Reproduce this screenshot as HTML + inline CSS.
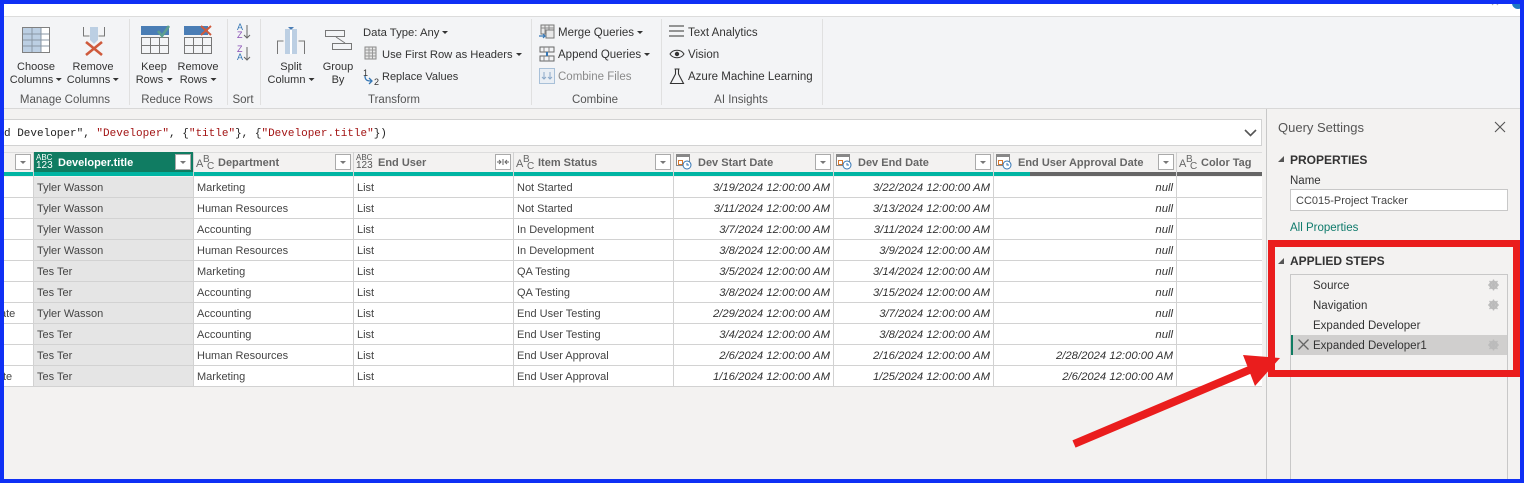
<!DOCTYPE html>
<html><head><meta charset="utf-8"><style>
html,body{margin:0;padding:0}
body{width:1524px;height:483px;position:relative;overflow:hidden;background:#f3f2f1;font-family:"Liberation Sans",sans-serif;font-size:11.5px;color:#333}
.a{position:absolute;white-space:nowrap}
.l{position:absolute;background:#d2d2d2}
.c{position:absolute;white-space:nowrap;text-align:center;transform:translateX(-50%);line-height:13px;font-size:11px;margin-top:1px}
.g{position:absolute;white-space:nowrap;text-align:center;transform:translateX(-50%);color:#555;top:94px;line-height:13px}
.h{position:absolute;top:156px;line-height:14px;font-weight:bold;color:#666;font-size:11px;white-space:nowrap}
.t{position:absolute;white-space:nowrap;line-height:14px;font-size:11px;color:#444;margin-top:1px}
.r{position:absolute;white-space:nowrap;line-height:14px;font-size:11.300px;color:#333;font-style:italic;text-align:right;margin-top:1px}
.b{position:absolute;top:154px;width:16px;height:16px;background:#fff;border:1px solid #aaa;box-sizing:border-box}
.b:after{content:"";position:absolute;left:4px;top:6px;border:3px solid transparent;border-top:3px solid #777;border-bottom:0}
svg{position:absolute;overflow:visible}
.ar:after{content:"";display:inline-block;margin-left:3px;vertical-align:2px;border:3px solid transparent;border-top:3px solid #333;border-bottom:0}
.ty{position:absolute;top:154px;font-size:8px;line-height:8px;color:#555}
.abc{position:absolute;top:0;left:0;font-size:11px;line-height:11px;color:#666}
.abc i{position:absolute;font-style:normal}
</style></head><body>
<div class="a" style="left:0;top:0;width:1524px;height:17px;background:#fff"></div>
<div class="a" style="left:0;top:17px;width:1524px;height:91px;background:#f3f4f6"></div>
<div class="l" style="left:0;top:16px;width:1524px;height:1px;background:#dcdcdc"></div>
<div class="l" style="left:0;top:108px;width:1524px;height:1px;background:#d8d8d8"></div>
<!-- ribbon separators -->
<div class="l" style="left:129px;top:19px;width:1px;height:86px;background:#e0e0e0"></div>
<div class="l" style="left:227px;top:19px;width:1px;height:86px;background:#e0e0e0"></div>
<div class="l" style="left:260px;top:19px;width:1px;height:86px;background:#e0e0e0"></div>
<div class="l" style="left:531px;top:19px;width:1px;height:86px;background:#e0e0e0"></div>
<div class="l" style="left:661px;top:19px;width:1px;height:86px;background:#e0e0e0"></div>
<div class="l" style="left:822px;top:19px;width:1px;height:86px;background:#e0e0e0"></div>
<!-- ribbon icons -->
<svg style="left:0;top:0" width="830" height="100" fill="none">
<rect x="22.5" y="27.5" width="27" height="25" fill="#fff" stroke="#808080"/>
<rect x="23" y="28" width="18" height="24" fill="#bccfe3"/>
<path d="M23 34h26M23 40h26M23 46h26M32 28v24M41 28v24" stroke="#8a97a5"/>
<path d="M83.500 27v9h6M104.500 27v9h-6" stroke="#777"/>
<path d="M90 27h8v13l-4 4-4-4z" fill="#bccfe3"/>
<path d="M86 42l16 13M102 42l-16 13" stroke="#cf5a3c" stroke-width="2.600"/>
<rect x="141" y="26" width="28" height="9" fill="#4a7db5"/>
<path d="M141.500 37.500h27v16h-27zM141.500 45.500h27M150.500 37.500v16M159.500 37.500v16" stroke="#777"/>
<path d="M158 31l4 5 7-10" stroke="#5d9f90" stroke-width="2.600"/>
<rect x="184" y="26" width="24" height="9" fill="#4a7db5"/>
<path d="M184.500 37.500h27v16h-27zM184.500 45.500h27M193.500 37.500v16M202.500 37.500v16" stroke="#777"/>
<path d="M201 26l10 9M211 26l-10 9" stroke="#cf5a3c" stroke-width="2"/>
<path d="M247 25v13M244 35l3 3 3-3M247 47v13M244 57l3 3 3-3" stroke="#666"/>
<path d="M277.500 54v-13h6M304.500 54v-13h-6" stroke="#777"/>
<rect x="285" y="29" width="12" height="25" fill="#bccfe3"/>
<path d="M291 29v25" stroke="#fff" stroke-width="2"/>
<path d="M288 27h6l-3 3z" fill="#4a7db5"/>
<path d="M325.500 30.500h19v6h-19zM332.500 43.500h19v6h-19zM336 37l9 6" stroke="#777" fill="#f3f4f6"/>
<rect x="365" y="47" width="11" height="12" fill="#e8e8e8" stroke="#888"/>
<path d="M365 50h11M365 53h11M365 56h11M369 47v12M372.500 47v12" stroke="#999"/>
<path d="M365 76c0 4 2 5 6 5M369 78l3 3-3 3" stroke="#3476b5" stroke-width="1.300"/>
<rect x="541" y="25" width="13" height="9" fill="#e8e8e8" stroke="#777"/><path d="M541 28h13M545 25v9M549 25v9" stroke="#888"/>
<rect x="546" y="30" width="8" height="8" fill="#e8e8e8" stroke="#777"/>
<path d="M539 36h6l-2-2M545 36l-2 2" stroke="#3476b5" stroke-width="1.200"/>
<path d="M540 47h14v5h-14zM540 56h14v5h-14z" stroke="#666" fill="#f3f4f6"/>
<path d="M544 47v5M549 47v5M544 56v5M549 56v5" stroke="#888"/>
<path d="M547 52v4" stroke="#3476b5" stroke-width="2"/>
<rect x="539.500" y="68.500" width="15" height="15" fill="#e9eef4" stroke="#a8c0d8"/>
<path d="M544 72v7M542 77l2 2 2-2M550 72v7M548 77l2 2 2-2" stroke="#8aa8c8"/>
<path d="M669 26h15M669 31h15M669 36h15" stroke="#333"/>
<path d="M670 54c3-5 11-5 14 0-3 5-11 5-14 0z" stroke="#333"/><circle cx="677" cy="54" r="2.200" fill="#333"/>
<path d="M674.500 69h5M675.500 69v5l-5 9.500h13l-5-9.500v-5" stroke="#333" stroke-width="1.100"/>
</svg>
<div class="a" style="left:237px;top:23px;font-size:9px;line-height:8px;color:#3476b5">A<br><span style="color:#8a4fb5">Z</span></div>
<div class="a" style="left:237px;top:45px;font-size:9px;line-height:8px;color:#8a4fb5">Z<br><span style="color:#3476b5">A</span></div>
<div class="c" style="left:36px;top:60px">Choose<br><span class="ar">Columns</span></div>
<div class="c" style="left:93px;top:60px">Remove<br><span class="ar">Columns</span></div>
<div class="c" style="left:154px;top:60px">Keep<br><span class="ar">Rows</span></div>
<div class="c" style="left:198px;top:60px">Remove<br><span class="ar">Rows</span></div>
<div class="c" style="left:291px;top:60px">Split<br><span class="ar">Column</span></div>
<div class="c" style="left:338px;top:60px">Group<br>By</div>
<div class="a ar" style="left:363px;top:26px;line-height:14px;font-size:11.300px">Data Type: Any</div>
<div class="a ar" style="left:382px;top:48px;line-height:14px;font-size:11.200px">Use First Row as Headers</div>
<div class="a" style="left:382px;top:70px;line-height:14px;font-size:11px">Replace Values</div>
<div class="a" style="left:363px;top:68px;font-size:9px;line-height:10px">1</div>
<div class="a" style="left:374px;top:77px;font-size:9px;line-height:10px">2</div>
<div class="a ar" style="left:558px;top:26px;line-height:14px">Merge Queries</div>
<div class="a ar" style="left:558px;top:48px;line-height:14px">Append Queries</div>
<div class="a" style="left:558px;top:70px;line-height:14px;color:#8a8a8a">Combine Files</div>
<div class="a" style="left:688px;top:26px;line-height:14px">Text Analytics</div>
<div class="a" style="left:688px;top:48px;line-height:14px">Vision</div>
<div class="a" style="left:688px;top:70px;line-height:14px">Azure Machine Learning</div>
<div class="g" style="left:65px">Manage Columns</div>
<div class="g" style="left:177px">Reduce Rows</div>
<div class="g" style="left:243px">Sort</div>
<div class="g" style="left:394px">Transform</div>
<div class="g" style="left:595px">Combine</div>
<div class="g" style="left:741px">AI Insights</div>
<!-- formula bar -->
<div class="a" style="left:0;top:119px;width:1262px;height:27px;background:#fff;border:1px solid #d2d2d2;border-left:0;box-sizing:border-box"></div>
<div class="a" style="left:4px;top:127px;font-family:'Liberation Mono',monospace;font-size:11px;line-height:14px;color:#222">d Developer", <span style="color:#a31515">"Developer"</span>, {<span style="color:#a31515">"title"</span>}, {<span style="color:#a31515">"Developer.title"</span>})</div>
<svg style="left:1244px;top:129px" width="13" height="8" fill="none"><path d="M1 1l5.500 5.500L12 1" stroke="#555" stroke-width="1.600"/></svg>
<!-- table -->
<div class="a" style="left:0;top:152px;width:1262px;height:20px;background:#f3f2f1;border-top:1px solid #ddd;box-sizing:border-box"></div>
<div class="a" style="left:34px;top:152px;width:159px;height:20px;background:#107c62"></div>
<div class="a" style="left:0;top:172px;width:1030px;height:4px;background:#00b5a3"></div>
<div class="a" style="left:1030px;top:172px;width:232px;height:4px;background:#666"></div>
<div class="a" style="left:0;top:177px;width:1262px;height:210px;background:#fff"></div>
<div class="a" style="left:34px;top:177px;width:159px;height:209px;background:#e5e5e5"></div>
<div class="l" style="left:0;top:197px;width:1262px;height:1px"></div>
<div class="l" style="left:0;top:218px;width:1262px;height:1px"></div>
<div class="l" style="left:0;top:239px;width:1262px;height:1px"></div>
<div class="l" style="left:0;top:260px;width:1262px;height:1px"></div>
<div class="l" style="left:0;top:281px;width:1262px;height:1px"></div>
<div class="l" style="left:0;top:302px;width:1262px;height:1px"></div>
<div class="l" style="left:0;top:323px;width:1262px;height:1px"></div>
<div class="l" style="left:0;top:344px;width:1262px;height:1px"></div>
<div class="l" style="left:0;top:365px;width:1262px;height:1px"></div>
<div class="l" style="left:0;top:386px;width:1262px;height:1px"></div>
<div class="l" style="left:33px;top:152px;width:1px;height:234px"></div>
<div class="l" style="left:193px;top:152px;width:1px;height:234px"></div>
<div class="l" style="left:353px;top:152px;width:1px;height:234px"></div>
<div class="l" style="left:513px;top:152px;width:1px;height:234px"></div>
<div class="l" style="left:673px;top:152px;width:1px;height:234px"></div>
<div class="l" style="left:833px;top:152px;width:1px;height:234px"></div>
<div class="l" style="left:993px;top:152px;width:1px;height:234px"></div>
<div class="l" style="left:1176px;top:152px;width:1px;height:234px"></div>
<div class="b" style="left:15px"></div>
<div class="ty" style="left:36px;color:#fff">ABC<br><span style="font-size:10px">123</span></div>
<div class="h" style="left:58px;color:#fff">Developer.title</div><div class="b" style="left:175px"></div>
<div class="abc" style="left:196px;top:153px"><i style="left:0;top:6px">A</i><i style="left:7px;top:1px;font-size:10px">B</i><i style="left:11px;top:8px;font-size:10px">C</i></div>
<div class="h" style="left:218px">Department</div><div class="b" style="left:335px"></div>
<div class="ty" style="left:356px">ABC<br><span style="font-size:10px">123</span></div>
<div class="h" style="left:378px">End User</div><div class="b" style="left:495px"></div>
<div class="abc" style="left:516px;top:153px"><i style="left:0;top:6px">A</i><i style="left:7px;top:1px;font-size:10px">B</i><i style="left:11px;top:8px;font-size:10px">C</i></div>
<div class="h" style="left:538px">Item Status</div><div class="b" style="left:655px"></div>
<div class="h" style="left:698px">Dev Start Date</div><div class="b" style="left:815px"></div>
<div class="h" style="left:858px">Dev End Date</div><div class="b" style="left:975px"></div>
<div class="h" style="left:1018px">End User Approval Date</div><div class="b" style="left:1158px"></div>
<div class="abc" style="left:1179px;top:153px"><i style="left:0;top:6px">A</i><i style="left:7px;top:1px;font-size:10px">B</i><i style="left:11px;top:8px;font-size:10px">C</i></div>
<div class="h" style="left:1201px">Color Tag</div>
<svg style="left:0;top:0" width="1200" height="175" fill="none">
<rect x="496" y="155" width="14" height="14" fill="#fff"/>
<path d="M497 162h4M499 160l2 2-2 2M509 162h-4M507 160l-2 2 2 2M503 159v6" stroke="#666"/>
<g><rect x="676.500" y="154.500" width="13" height="11" fill="#fff" stroke="#888"/><rect x="677" y="155" width="12" height="2" fill="#888"/><rect x="678.500" y="160.500" width="4" height="4" stroke="#d9772b"/><circle cx="687" cy="165" r="4" fill="#fff" stroke="#3476b5"/><path d="M687 163v2h2" stroke="#3476b5"/></g>
<g><rect x="836.500" y="154.500" width="13" height="11" fill="#fff" stroke="#888"/><rect x="837" y="155" width="12" height="2" fill="#888"/><rect x="838.500" y="160.500" width="4" height="4" stroke="#d9772b"/><circle cx="847" cy="165" r="4" fill="#fff" stroke="#3476b5"/><path d="M847 163v2h2" stroke="#3476b5"/></g>
<g><rect x="996.500" y="154.500" width="13" height="11" fill="#fff" stroke="#888"/><rect x="997" y="155" width="12" height="2" fill="#888"/><rect x="998.500" y="160.500" width="4" height="4" stroke="#d9772b"/><circle cx="1007" cy="165" r="4" fill="#fff" stroke="#3476b5"/><path d="M1007 163v2h2" stroke="#3476b5"/></g>
</svg>
<!-- rows -->
<div class="t" style="left:37px;top:180px">Tyler Wasson</div><div class="t" style="left:197px;top:180px">Marketing</div><div class="t" style="left:357px;top:180px">List</div><div class="t" style="left:517px;top:180px">Not Started</div><div class="r" style="right:694px;top:180px">3/19/2024 12:00:00 AM</div><div class="r" style="right:534px;top:180px">3/22/2024 12:00:00 AM</div><div class="r" style="right:351px;top:180px">null</div>
<div class="t" style="left:37px;top:201px">Tyler Wasson</div><div class="t" style="left:197px;top:201px">Human Resources</div><div class="t" style="left:357px;top:201px">List</div><div class="t" style="left:517px;top:201px">Not Started</div><div class="r" style="right:694px;top:201px">3/11/2024 12:00:00 AM</div><div class="r" style="right:534px;top:201px">3/13/2024 12:00:00 AM</div><div class="r" style="right:351px;top:201px">null</div>
<div class="t" style="left:37px;top:222px">Tyler Wasson</div><div class="t" style="left:197px;top:222px">Accounting</div><div class="t" style="left:357px;top:222px">List</div><div class="t" style="left:517px;top:222px">In Development</div><div class="r" style="right:694px;top:222px">3/7/2024 12:00:00 AM</div><div class="r" style="right:534px;top:222px">3/11/2024 12:00:00 AM</div><div class="r" style="right:351px;top:222px">null</div>
<div class="t" style="left:37px;top:243px">Tyler Wasson</div><div class="t" style="left:197px;top:243px">Human Resources</div><div class="t" style="left:357px;top:243px">List</div><div class="t" style="left:517px;top:243px">In Development</div><div class="r" style="right:694px;top:243px">3/8/2024 12:00:00 AM</div><div class="r" style="right:534px;top:243px">3/9/2024 12:00:00 AM</div><div class="r" style="right:351px;top:243px">null</div>
<div class="t" style="left:37px;top:264px">Tes Ter</div><div class="t" style="left:197px;top:264px">Marketing</div><div class="t" style="left:357px;top:264px">List</div><div class="t" style="left:517px;top:264px">QA Testing</div><div class="r" style="right:694px;top:264px">3/5/2024 12:00:00 AM</div><div class="r" style="right:534px;top:264px">3/14/2024 12:00:00 AM</div><div class="r" style="right:351px;top:264px">null</div>
<div class="t" style="left:37px;top:285px">Tes Ter</div><div class="t" style="left:197px;top:285px">Accounting</div><div class="t" style="left:357px;top:285px">List</div><div class="t" style="left:517px;top:285px">QA Testing</div><div class="r" style="right:694px;top:285px">3/8/2024 12:00:00 AM</div><div class="r" style="right:534px;top:285px">3/15/2024 12:00:00 AM</div><div class="r" style="right:351px;top:285px">null</div>
<div class="t" style="left:0;top:306px">ate</div><div class="t" style="left:37px;top:306px">Tyler Wasson</div><div class="t" style="left:197px;top:306px">Accounting</div><div class="t" style="left:357px;top:306px">List</div><div class="t" style="left:517px;top:306px">End User Testing</div><div class="r" style="right:694px;top:306px">2/29/2024 12:00:00 AM</div><div class="r" style="right:534px;top:306px">3/7/2024 12:00:00 AM</div><div class="r" style="right:351px;top:306px">null</div>
<div class="t" style="left:37px;top:327px">Tes Ter</div><div class="t" style="left:197px;top:327px">Accounting</div><div class="t" style="left:357px;top:327px">List</div><div class="t" style="left:517px;top:327px">End User Testing</div><div class="r" style="right:694px;top:327px">3/4/2024 12:00:00 AM</div><div class="r" style="right:534px;top:327px">3/8/2024 12:00:00 AM</div><div class="r" style="right:351px;top:327px">null</div>
<div class="t" style="left:37px;top:348px">Tes Ter</div><div class="t" style="left:197px;top:348px">Human Resources</div><div class="t" style="left:357px;top:348px">List</div><div class="t" style="left:517px;top:348px">End User Approval</div><div class="r" style="right:694px;top:348px">2/6/2024 12:00:00 AM</div><div class="r" style="right:534px;top:348px">2/16/2024 12:00:00 AM</div><div class="r" style="right:351px;top:348px">2/28/2024 12:00:00 AM</div>
<div class="t" style="left:3px;top:369px">te</div><div class="t" style="left:37px;top:369px">Tes Ter</div><div class="t" style="left:197px;top:369px">Marketing</div><div class="t" style="left:357px;top:369px">List</div><div class="t" style="left:517px;top:369px">End User Approval</div><div class="r" style="right:694px;top:369px">1/16/2024 12:00:00 AM</div><div class="r" style="right:534px;top:369px">1/25/2024 12:00:00 AM</div><div class="r" style="right:351px;top:369px">2/6/2024 12:00:00 AM</div>
<!-- query settings -->
<div class="l" style="left:1266px;top:109px;width:1px;height:374px;background:#c8c8c8"></div>
<div class="a" style="left:1278px;top:119px;font-size:13px;line-height:17px;color:#555">Query Settings</div>
<svg style="left:1494px;top:121px" width="12" height="12" fill="none"><path d="M1 1l10 10M11 1L1 11" stroke="#555" stroke-width="1.100"/></svg>
<div class="a" style="left:1278px;top:156px;width:0;height:0;border-style:solid;border-width:0 0 6px 6px;border-color:transparent transparent #555 transparent"></div>
<div class="a" style="left:1290px;top:153px;font-size:12px;font-weight:bold;line-height:15px;color:#333">PROPERTIES</div>
<div class="a" style="left:1290px;top:174px;font-size:11.500px;line-height:14px">Name</div>
<div class="a" style="left:1290px;top:189px;width:218px;height:22px;background:#fff;border:1px solid #c8c8c8;box-sizing:border-box;padding-left:5px;line-height:22px;font-size:11px;color:#444">CC015-Project Tracker</div>
<div class="a" style="left:1290px;top:221px;font-size:11.500px;line-height:14px;color:#0f7b6c">All Properties</div>
<div class="a" style="left:1278px;top:258px;width:0;height:0;border-style:solid;border-width:0 0 6px 6px;border-color:transparent transparent #555 transparent"></div>
<div class="a" style="left:1290px;top:254px;font-size:12px;font-weight:bold;line-height:15px;color:#333">APPLIED STEPS</div>
<div class="a" style="left:1290px;top:274px;width:218px;height:209px;border:1px solid #c8c8c8;border-bottom:0;box-sizing:border-box"></div>
<div class="a" style="left:1291px;top:335px;width:216px;height:20px;background:#d0cfce"></div>
<div class="a" style="left:1291px;top:335px;width:2px;height:20px;background:#107c62"></div>
<div class="a" style="left:1313px;top:279px;font-size:11.500px;line-height:14px">Source</div>
<div class="a" style="left:1313px;top:299px;font-size:11.500px;line-height:14px">Navigation</div>
<div class="a" style="left:1313px;top:319px;font-size:11.500px;line-height:14px">Expanded Developer</div>
<div class="a" style="left:1313px;top:339px;font-size:11.500px;line-height:14px">Expanded Developer1</div>
<svg style="left:1298px;top:339px" width="11" height="11" fill="none"><path d="M.5.5l10 10M10.500.5l-10 10" stroke="#666" stroke-width="1.300"/></svg>
<svg style="left:0;top:0" width="1524" height="483" fill="none">
<g stroke="#bbb" stroke-width="2.200"><circle cx="1493.500" cy="285" r="3.400"/><path d="M1493.500 279.500v11M1488 285h11M1489.500 281l8 8M1497.500 281l-8 8" stroke-width="1.300"/></g>
<g stroke="#bbb" stroke-width="2.200"><circle cx="1493.500" cy="305" r="3.400"/><path d="M1493.500 299.500v11M1488 305h11M1489.500 301l8 8M1497.500 301l-8 8" stroke-width="1.300"/></g>
<g stroke="#bbb" stroke-width="2.200"><circle cx="1493.500" cy="345" r="3.400"/><path d="M1493.500 339.500v11M1488 345h11M1489.500 341l8 8M1497.500 341l-8 8" stroke-width="1.300"/></g>
<path d="M1492 5l3-3 3 3" stroke="#aaa"/>
<circle cx="1518" cy="3" r="6" fill="#1b78c4"/>
<!-- annotations -->
<path d="M1271.500 243.500h245v130h-245z" stroke="#ea1d1d" stroke-width="7"/>
<path d="M1074 444L1254 368" stroke="#ea1d1d" stroke-width="8"/>
<path d="M1243 355L1280 358L1255 386z" fill="#ea1d1d"/>
</svg>
<!-- blue frame -->
<div class="a" style="left:0;top:0;width:1524px;height:4px;background:#0f30f5"></div>
<div class="a" style="left:0;top:479px;width:1524px;height:4px;background:#0f30f5"></div>
<div class="a" style="left:0;top:0;width:4px;height:483px;background:#0f30f5"></div>
<div class="a" style="left:1520px;top:0;width:4px;height:483px;background:#0f30f5"></div>
</body></html>
